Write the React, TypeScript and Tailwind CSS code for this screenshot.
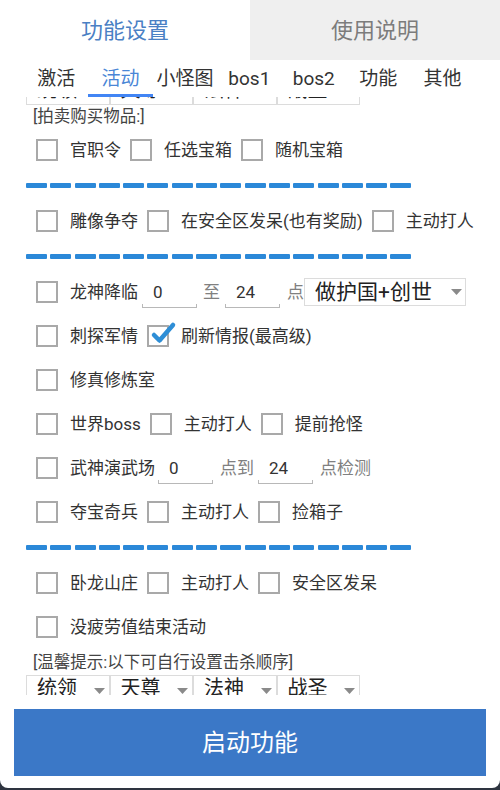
import React from "react";

const FONT = "font-['Roboto','Noto_Sans_CJK_SC','Noto_Sans',sans-serif]";

function Cb({ checked = false }: { checked?: boolean }) {
  return (
    <div className="relative w-[22px] h-[22px] shrink-0 border-2 border-[#a9a9a9] bg-white">
      {checked && (
        <svg className="absolute left-[1px] top-[-6px] overflow-visible" width="26" height="24" viewBox="0 0 26 24">
          <path d="M4 14 L9.5 19.5 L23 4" fill="none" stroke="#2e8ed6" strokeWidth="4.5" strokeLinecap="round" strokeLinejoin="round" />
        </svg>
      )}
    </div>
  );
}

function Label({ children, ml = "ml-[12px]", gray = false }: { children: React.ReactNode; ml?: string; gray?: boolean }) {
  return (
    <span className={`${ml} text-[17px] leading-[22px] whitespace-nowrap ${gray ? "text-[#808080]" : "text-[#333]"}`}>
      {children}
    </span>
  );
}

function Input({ value, ml }: { value: string; ml: string }) {
  return (
    <div className={`${ml} w-[55px] h-[32px] flex flex-col justify-end shrink-0`}>
      <div className="h-[24px] leading-[24px] pl-[11px] text-[17px] text-[#333]">{value}</div>
      <div className="h-[4px] border-x border-b border-[#b8b8b8]" />
    </div>
  );
}

function Arrow() {
  return (
    <svg width="11" height="6" viewBox="0 0 11 6" className="shrink-0">
      <path d="M0 0 L11 0 L5.5 6 Z" fill="#8a8a8a" />
    </svg>
  );
}

function SmallSelect({ text }: { text: string }) {
  return (
    <div className="w-[83.5px] h-[28px] border border-[#dcdcdc] flex items-start pl-[10px] pr-[4px] shrink-0">
      <span className="text-[20px] leading-[24px] text-[#222] whitespace-nowrap">{text}</span>
      <div className="ml-auto mt-[12px]">
        <Arrow />
      </div>
    </div>
  );
}

function Dashes() {
  return (
    <div className="h-[27px] flex items-center pl-[26px] gap-[3.3px]">
      {Array.from({ length: 16 }).map((_, i) => (
        <div key={i} className="w-[21px] h-[5px] bg-[#2b88d8] rounded-[1px]" />
      ))}
    </div>
  );
}

function Row({ children }: { children: React.ReactNode }) {
  return <div className="h-[44px] flex items-center pl-[36px]">{children}</div>;
}

export default function App() {
  const subTabs = ["激活", "活动", "小怪图", "bos1", "bos2", "功能", "其他"];
  return (
    <div className={`w-[500px] h-[790px] bg-[#2e3440] ${FONT}`}>
      <div className="w-[500px] h-[788px] bg-white rounded-b-[8px] flex flex-col overflow-hidden">
        {/* top tabs */}
        <div className="h-[60px] flex shrink-0">
          <div className="w-[250px] flex items-center justify-center text-[22px] text-[#4a80c4]">功能设置</div>
          <div className="w-[250px] bg-[#efefef] flex items-center justify-center text-[22px] text-[#7c7c7c]">使用说明</div>
        </div>
        {/* sub tabs */}
        <div className="h-[37px] flex px-[24px] shrink-0">
          {subTabs.map((t, i) => (
            <div key={t} className="w-[64.4px] flex flex-col items-center">
              <div className={`flex-1 flex items-center pt-[4px] text-[19px] whitespace-nowrap ${i === 1 ? "text-[#4a86d6]" : "text-[#333]"}`}>{t}</div>
              <div className={`w-full h-[3px] ${i === 1 ? "bg-[#4285f4]" : ""}`} />
            </div>
          ))}
        </div>
        {/* scroll content */}
        <div className="h-[598px] overflow-hidden shrink-0">
          <div className="flex pl-[26px] mt-[-20px]">
            <SmallSelect text="统领" />
            <SmallSelect text="天尊" />
            <SmallSelect text="法神" />
            <SmallSelect text="战圣" />
          </div>
          <div className="h-[23px] leading-[23px] pl-[33px] text-[16.5px] text-[#444]">[拍卖购买物品:]</div>
          <Row>
            <Cb />
            <Label>官职令</Label>
            <div className="ml-[9px]"><Cb /></div>
            <Label>任选宝箱</Label>
            <div className="ml-[9px]"><Cb /></div>
            <Label>随机宝箱</Label>
          </Row>
          <Dashes />
          <Row>
            <Cb />
            <Label>雕像争夺</Label>
            <div className="ml-[9px]"><Cb /></div>
            <Label>在安全区发呆(也有奖励)</Label>
            <div className="ml-[9px]"><Cb /></div>
            <Label>主动打人</Label>
          </Row>
          <Dashes />
          <Row>
            <Cb />
            <Label>龙神降临</Label>
            <Input value="0" ml="ml-[4px]" />
            <Label ml="ml-[6px]" gray>至</Label>
            <Input value="24" ml="ml-[5px]" />
            <Label ml="ml-[7px]" gray>点</Label>
            <div className="w-[162px] h-[28px] border border-[#dcdcdc] flex items-center pl-[10px] pr-[3px] shrink-0">
              <span className="text-[21px] leading-[26px] text-[#222] whitespace-nowrap">做护国+创世</span>
              <div className="ml-auto"><Arrow /></div>
            </div>
          </Row>
          <Row>
            <Cb />
            <Label>刺探军情</Label>
            <div className="ml-[9px]"><Cb checked /></div>
            <Label>刷新情报(最高级)</Label>
          </Row>
          <Row>
            <Cb />
            <Label>修真修炼室</Label>
          </Row>
          <Row>
            <Cb />
            <Label>世界boss</Label>
            <div className="ml-[9px]"><Cb /></div>
            <Label>主动打人</Label>
            <div className="ml-[9px]"><Cb /></div>
            <Label>提前抢怪</Label>
          </Row>
          <Row>
            <Cb />
            <Label>武神演武场</Label>
            <Input value="0" ml="ml-[3px]" />
            <Label ml="ml-[7px]" gray>点到</Label>
            <Input value="24" ml="ml-[4px]" />
            <Label ml="ml-[7px]" gray>点检测</Label>
          </Row>
          <Row>
            <Cb />
            <Label>夺宝奇兵</Label>
            <div className="ml-[9px]"><Cb /></div>
            <Label>主动打人</Label>
            <div className="ml-[9px]"><Cb /></div>
            <Label>捡箱子</Label>
          </Row>
          <Dashes />
          <Row>
            <Cb />
            <Label>卧龙山庄</Label>
            <div className="ml-[9px]"><Cb /></div>
            <Label>主动打人</Label>
            <div className="ml-[9px]"><Cb /></div>
            <Label>安全区发呆</Label>
          </Row>
          <Row>
            <Cb />
            <Label>没疲劳值结束活动</Label>
          </Row>
          <div className="h-[26px] leading-[28px] pl-[33px] text-[16.5px] text-[#444] whitespace-nowrap">[温馨提示:以下可自行设置击杀顺序]</div>
          <div className="flex pl-[26px]">
            <SmallSelect text="统领" />
            <SmallSelect text="天尊" />
            <SmallSelect text="法神" />
            <SmallSelect text="战圣" />
          </div>
        </div>
        {/* button */}
        <div className="pt-[14px] px-[14px]">
          <div className="h-[67px] bg-[#3b78c7] flex items-center justify-center text-[24px] text-white">启动功能</div>
        </div>
      </div>
    </div>
  );
}
